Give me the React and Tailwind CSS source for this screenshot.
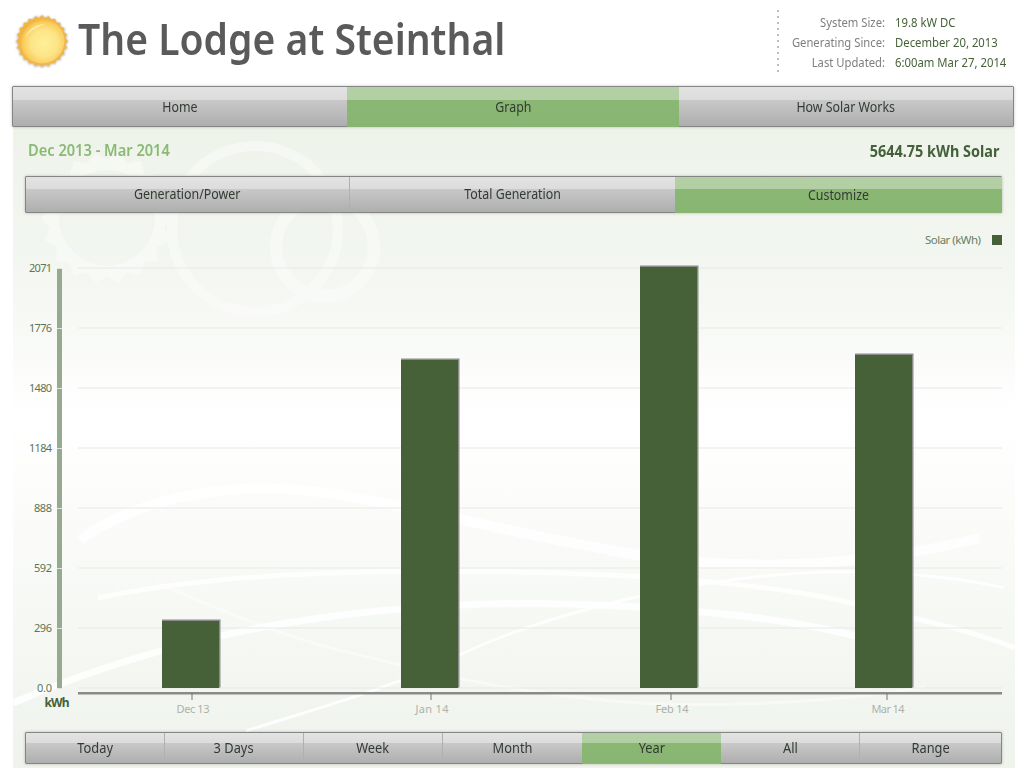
const font = { fontFamily: '"Noto Sans", "Open Sans", sans-serif' };

function Sun() {
  const pts = [];
  for (let i = 0; i < 48; i++) {
    const r = i % 2 ? 24 : 26.5;
    const a = (i / 48) * Math.PI * 2;
    pts.push(`${(28 + r * Math.cos(a)).toFixed(1)},${(28 + r * Math.sin(a)).toFixed(1)}`);
  }
  return (
    <svg width="56" height="56" viewBox="0 0 56 56" className="shrink-0">
      <defs>
        <radialGradient id="sunFill" cx="55%" cy="55%" r="55%">
          <stop offset="0%" stopColor="#fff09a" />
          <stop offset="55%" stopColor="#fde486" />
          <stop offset="85%" stopColor="#f9cd5c" />
          <stop offset="100%" stopColor="#f2b23c" />
        </radialGradient>
        <filter id="sunGlow" x="-20%" y="-20%" width="140%" height="140%">
          <feGaussianBlur stdDeviation="1.1" />
        </filter>
      </defs>
      <polygon points={pts.join(" ")} fill="#a89a80" opacity="0.75" filter="url(#sunGlow)" transform="translate(0 0.6)" />
      <polygon points={pts.join(" ")} fill="#f3b544" transform="translate(28 28) scale(0.97) translate(-28 -28)" />
      <circle cx="28" cy="28" r="22.5" fill="url(#sunFill)" />
      <path d="M11 25 C14 16 22 11 31 11 C23 14 16 18 11 25Z" fill="#fff4c0" opacity="0.7" />
    </svg>
  );
}

function Tabs({ items, active, className, text }) {
  return (
    <div className={`grid rounded-[1px] border border-[#858585] shadow-[0_0_3px_rgba(0,0,0,0.25)] ${className}`}>
      {items.map((label, i) => (
        <div
          key={label}
          className={`flex items-center justify-center whitespace-nowrap text-[#333a33] ${text} ${
            i === active
              ? "-mb-px bg-[linear-gradient(#b3d1a5_0%,#b1cfa2_33%,#8ab874_33%,#88b672_100%)]"
              : "bg-[linear-gradient(#e3e3e3_0%,#dcdcdc_33%,#c9c9c9_33%,#aeaeae_100%)]"
          } ${i === active && i === items.length - 1 ? "-mr-px" : ""} ${
            i < items.length - 1 && i !== active && i + 1 !== active ? "border-r border-[#b0b0b0]" : ""
          }`}
        >
          <span className="scale-x-[0.885]">{label}</span>
        </div>
      ))}
    </div>
  );
}

function Backdrop() {
  const teeth = [];
  for (let i = 0; i < 18; i++) {
    const a = (i / 18) * Math.PI * 2;
    const b = a + Math.PI / 18;
    teeth.push(`${107 + 66 * Math.cos(a)},${218 + 66 * Math.sin(a)}`);
    teeth.push(`${107 + 58 * Math.cos(b)},${218 + 58 * Math.sin(b)}`);
  }
  return (
    <svg className="absolute left-0 top-0 h-full w-full" viewBox="13 127 1002 641" fill="none">
      <g opacity="0.4">
        <path
          fillRule="evenodd"
          fill="#fff"
          d={`M${teeth.join(" L")} Z M155 218 A48 48 0 1 0 59 218 A48 48 0 1 0 155 218 Z`}
        />
        <circle cx="255" cy="229" r="83" stroke="#fff" strokeWidth="10" />
        <circle cx="325" cy="247" r="49" stroke="#fff" strokeWidth="12" />
      </g>
      <g stroke="#fff" strokeLinecap="butt">
        <path d="M80 540 C150 490 250 480 340 495 C430 510 520 535 610 550 C720 572 850 570 980 538" strokeWidth="10" opacity="0.8" />
        <path d="M98 598 C230 570 400 570 520 572 C660 575 780 585 860 605 C920 620 970 630 1015 648" strokeWidth="5" opacity="0.8" />
        <path d="M1004 588 C950 575 860 568 790 574 C690 580 560 610 470 650 C390 690 310 710 246 731" strokeWidth="3" opacity="0.85" />
        <path d="M13 703 C100 665 190 640 280 624 C400 604 520 600 620 606 C720 612 800 620 870 640" strokeWidth="7" opacity="0.85" />
        <path d="M157 583 C220 610 290 640 360 655 C440 675 520 695 640 703 C740 708 850 700 925 687" strokeWidth="3" opacity="0.45" />
      </g>
    </svg>
  );
}

function Chart() {
  const rows = [
    [268, "2071"], [328, "1776"], [388, "1480"], [448, "1184"],
    [508, "888"], [568, "592"], [628, "296"], [688, "0.0"],
  ];
  const bars = [[162, 621], [401, 360], [640, 267], [855, 355]];
  const months = [[192, "Dec 13"], [431, "Jan 14"], [671, "Feb 14"], [887, "Mar 14"]];
  return (
    <svg className="h-[519px] w-full" viewBox="13 213 1002 519" style={font}>
      {rows.map(([y]) => <rect key={y} x="78" y={y - 0.5} width="924" height="1" fill="#e6eae4" />)}
      <rect x="57" y="269" width="5" height="419" fill="#95aa8f" />
      {rows.map(([y, t]) => (
        <g key={t}>
          <rect x="57" y={y} width="5" height="1" fill="#dfe5dc" />
          <text x="52" y={y + 4} textAnchor="end" fontSize="11" fill="#5d7556" textLength={t.length === 4 ? 23 : t.length === 3 && t !== "0.0" ? 18 : 15}>{t}</text>
        </g>
      ))}
      {bars.map(([x, y]) => (
        <g key={x}>
          <rect x={x} y={y - 1.5} width={58.5} height={689 - y} fill="#8c8c8c" />
          <rect x={x} y={y} width="57" height={688 - y} fill="#466137" />
        </g>
      ))}
      <rect x="78" y="692" width="924" height="2.5" fill="#8a8a8a" />
      {months.map(([x, t]) => (
        <g key={t}>
          <rect x={x - 0.5} y="693" width="1" height="7" fill="#777" />
          <text x={x + 1} y="713" textAnchor="middle" fontSize="11" fill="#adb1ac" textLength="33">{t}</text>
        </g>
      ))}
      <text x="57" y="707" textAnchor="middle" fontSize="12" fontWeight="700" fill="#466137" textLength="25">kWh</text>
      <text x="981" y="244" textAnchor="end" fontSize="11.5" fill="#688061" textLength="56">Solar (kWh)</text>
      <rect x="992" y="235" width="10" height="10" fill="#466137" />
    </svg>
  );
}

export default function App() {
  return (
    <div className="relative h-[771px] w-[1024px] overflow-hidden bg-white" style={font}>
      <header className="flex h-[86px]">
        <div className="ml-[14px] mt-[13px]"><Sun /></div>
        <h1 className="ml-[8px] mt-[10px] h-[56px] w-[700px] origin-left scale-x-[0.888] whitespace-nowrap text-[44px] font-semibold leading-[56px] text-[#5a5a5a]">
          The Lodge at Steinthal
        </h1>
      </header>
      <div className="relative z-10 ml-[12px] w-[1002px]">
        <Tabs items={["Home", "Graph", "How Solar Works"]} active={1} className="h-[41px] grid-cols-[334px_332px_1fr]" text="text-[14px] pb-px" />
      </div>
      <main className="relative ml-[13px] h-[641px] w-[1002px] bg-[linear-gradient(#eef3ea_0%,#f4f7f2_25%,#ffffff_45%,#fbfcfa_60%,#eff3ec_100%)]">
        <Backdrop />
        <div className="relative">
          <div className="flex h-[49px] items-start justify-between pl-[15px] pr-[16px] pt-[12px]">
            <span className="origin-left scale-x-[0.943] text-[15.5px] font-semibold leading-[22px] text-[#88ba74]">Dec 2013 - Mar 2014</span>
            <span className="origin-right scale-x-[0.93] text-[15.5px] font-bold leading-[24px] text-[#44603a]">5644.75 kWh Solar</span>
          </div>
          <div className="ml-[12px] mr-[13px]">
            <Tabs items={["Generation/Power", "Total Generation", "Customize"]} active={2} className="h-[37px] grid-cols-[324px_325px_1fr]" text="text-[14px] pb-[2px]" />
          </div>
          <Chart />
          <div className="ml-[12px] mr-[13px]">
            <Tabs items={["Today", "3 Days", "Week", "Month", "Year", "All", "Range"]} active={4} className="h-[32px] grid-cols-[139px_139px_139px_139px_139px_139px_1fr]" text="text-[14.5px] pb-px" />
          </div>
        </div>
      </main>
      <aside className="absolute left-[777px] top-[10px] flex h-[64px] text-[12.5px] leading-[20px]">
        <div className="h-full w-[2px] bg-[repeating-linear-gradient(#bdbdbd_0px,#bdbdbd_2px,transparent_2px,transparent_6px)]" />
        <div className="w-[106px] pt-[3px] text-right text-[#7f7f7f]">
          <div className="origin-right scale-x-[0.9] whitespace-nowrap">System Size:</div>
          <div className="origin-right scale-x-[0.9] whitespace-nowrap">Generating Since:</div>
          <div className="origin-right scale-x-[0.9] whitespace-nowrap">Last Updated:</div>
        </div>
        <div className="ml-[10px] w-[125px] pt-[3px] text-[#466137]">
          <div className="origin-left scale-x-[0.905] whitespace-nowrap">19.8 kW DC</div>
          <div className="origin-left scale-x-[0.905] whitespace-nowrap">December 20, 2013</div>
          <div className="origin-left scale-x-[0.905] whitespace-nowrap">6:00am Mar 27, 2014</div>
        </div>
      </aside>
    </div>
  );
}
